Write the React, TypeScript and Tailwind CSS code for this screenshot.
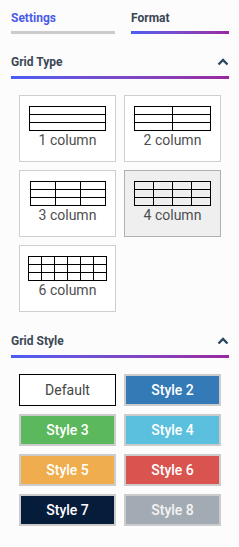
import React from "react";

type GridOption = { label: string; cols: number; cell: number; selected?: boolean };

const gridOptions: GridOption[] = [
  { label: "1 column", cols: 1, cell: 75 },
  { label: "2 column", cols: 2, cell: 37 },
  { label: "3 column", cols: 3, cell: 24 },
  { label: "4 column", cols: 4, cell: 18, selected: true },
  { label: "6 column", cols: 6, cell: 12 },
];

const styleOptions = [
  { label: "Default", className: "bg-white border border-black text-[#444]" },
  { label: "Style 2", className: "bg-[#337ab7] border-2 border-[#cccccc] text-white font-medium" },
  { label: "Style 3", className: "bg-[#5cb85c] border-2 border-[#cccccc] text-white font-medium" },
  { label: "Style 4", className: "bg-[#5bc0de] border-2 border-[#cccccc] text-white font-medium" },
  { label: "Style 5", className: "bg-[#f0ad4e] border-2 border-[#cccccc] text-white font-medium" },
  { label: "Style 6", className: "bg-[#d9534f] border-2 border-[#cccccc] text-white font-medium" },
  { label: "Style 7", className: "bg-[#061c3b] border-2 border-[#cccccc] text-white font-medium" },
  { label: "Style 8", className: "bg-[#a2abb3] border-2 border-[#cccccc] text-[#f4f4f4] font-medium" },
];

function TableIcon({ cols, cell, selected }: { cols: number; cell: number; selected?: boolean }) {
  const cells = Array.from({ length: cols * 3 });
  return (
    <div
      className="grid gap-px bg-black p-px"
      style={{ gridTemplateColumns: `repeat(${cols}, ${cell}px)` }}
    >
      {cells.map((_, i) => (
        <div key={i} className={`h-[7px] ${selected ? "bg-[#efefef]" : "bg-white"}`} />
      ))}
    </div>
  );
}

function SectionHeader({ title }: { title: string }) {
  return (
    <div>
      <div className="flex h-[16px] items-center justify-between">
        <span className="text-[12px] font-bold leading-[16px] text-[#3a4854]">{title}</span>
        <svg width="12" height="8" viewBox="0 0 12 8">
          <polyline
            points="1.5,6.5 6,2 10.5,6.5"
            fill="none"
            stroke="#2b4763"
            strokeWidth="2.4"
          />
        </svg>
      </div>
      <div className="mt-[6px] h-[3px] bg-linear-to-r from-[#4a5cf3] to-[#9a279f]" />
    </div>
  );
}

export default function App() {
  return (
    <div
      className="h-[547px] w-[239px] bg-[#fcfcfc] pl-[11px] pr-[10px] pt-[10px]"
      style={{ fontFamily: "Roboto, 'Liberation Sans', sans-serif" }}
    >
      {/* Tabs */}
      <div className="flex gap-[16px]">
        <div className="w-[104px]">
          <div className="text-[12px] font-bold leading-[16px] text-[#4a5be9]">Settings</div>
          <div className="mt-[5px] h-[3px] bg-[#cccccc]" />
        </div>
        <div className="w-[98px]">
          <div className="text-[12px] font-bold leading-[16px] text-[#3a4552]">Format</div>
          <div className="mt-[5px] h-[3px] bg-linear-to-r from-[#4a5cf3] to-[#9a279f]" />
        </div>
      </div>

      {/* Grid Type */}
      <div className="mt-[20px]">
        <SectionHeader title="Grid Type" />
        <div className="mt-[16px] grid grid-cols-2 gap-[8px] px-[8px]">
          {gridOptions.map((opt) => (
            <div
              key={opt.label}
              className={`flex h-[67px] flex-col items-center pt-[10px] ${
                opt.selected
                  ? "border border-[#b0b0b0] bg-[#efefef]"
                  : "border border-[#cfcfcf] bg-white"
              }`}
            >
              <TableIcon cols={opt.cols} cell={opt.cell} selected={opt.selected} />
              <span className="mt-[1px] text-[14px] leading-[17px] text-[#4e4e4e]">{opt.label}</span>
            </div>
          ))}
        </div>
      </div>

      {/* Grid Style */}
      <div className="mt-[21px]">
        <SectionHeader title="Grid Style" />
        <div className="mt-[16px] grid grid-cols-2 gap-[8px] px-[8px]">
          {styleOptions.map((opt) => (
            <div
              key={opt.label}
              className={`flex h-[32px] items-center justify-center text-[14px] leading-[17px] ${opt.className}`}
            >
              {opt.label}
            </div>
          ))}
        </div>
      </div>
    </div>
  );
}
